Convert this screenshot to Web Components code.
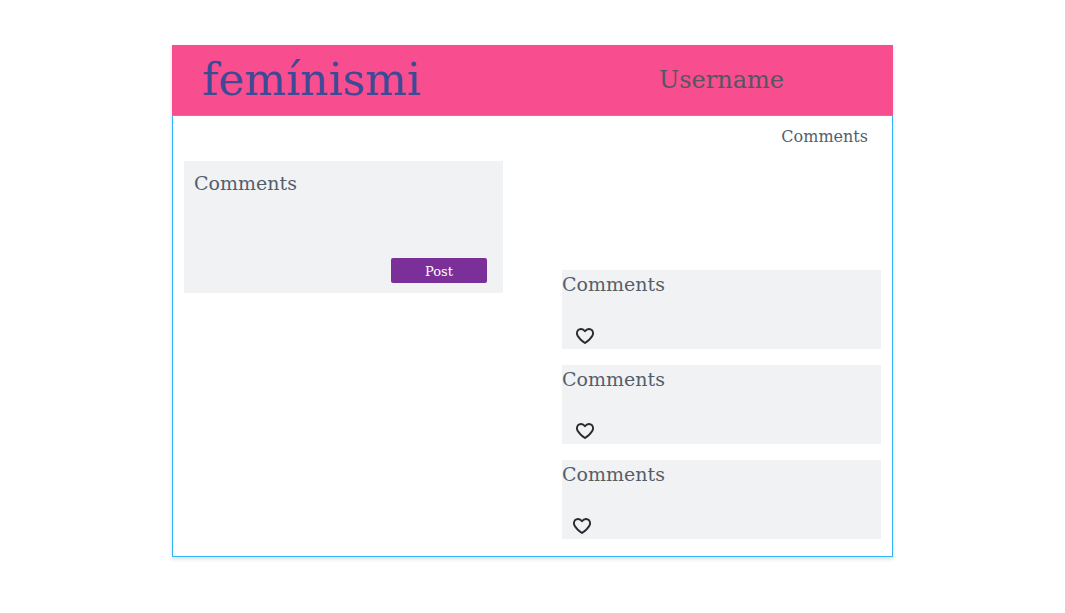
<!DOCTYPE html>
<html lang="en">
<head>
<meta charset="utf-8">
<meta name="viewport" content="width=device-width, initial-scale=1">
<title>femínismi</title>
<style>
body { margin: 0; padding: 45px 16px; background: #fff; color: #545e6b; font-family: "DejaVu Serif", serif; }
</style>
</head>
<body>
<fem-page>
  <fem-header slot="header" user="Username">femínismi</fem-header>
  <fem-nav slot="nav">Comments</fem-nav>
  <fem-composer slot="main" action="Post">Comments</fem-composer>
  <fem-feed slot="aside">
    <fem-comment>Comments</fem-comment>
    <fem-comment>Comments</fem-comment>
    <fem-comment class="near">Comments</fem-comment>
  </fem-feed>
</fem-page>
<script>
function define(name, html, setup) {
  const template = document.createElement('template');
  template.innerHTML = html;
  customElements.define(name, class extends HTMLElement {
    constructor() {
      super();
      this.attachShadow({ mode: 'open' }).append(template.content.cloneNode(true));
    }
    connectedCallback() {
      if (setup) setup(this, this.shadowRoot);
    }
  });
}

define('fem-page', `
<style>
:host { display: block; box-sizing: border-box; max-width: 721px; margin: 0 auto; border: 1px solid #2fb4fb; border-top: 0; box-shadow: 0 2px 4px rgba(0, 0, 0, .14); }
main { display: grid; grid-template-columns: 1fr 1fr; column-gap: 59px; align-items: start; padding: 0 11px 17px; }
::slotted([slot=header]) { margin: 0 -1px; }
</style>
<slot name="header"></slot>
<slot name="nav"></slot>
<main><slot name="main"></slot><slot name="aside"></slot></main>`);

define('fem-header', `
<style>
:host { display: block; background: #f84d8e; border-bottom: 1px solid #2fb4fb; }
header { display: grid; grid-template-columns: 487px 1fr; align-items: center; min-height: 70px; }
h1 { margin: 0; padding-left: 30px; color: #3e4a95; font-size: 44px; line-height: 64px; font-weight: 400; }
a { color: #545763; font-size: 24px; line-height: 32px; text-decoration: none; }
</style>
<header><h1><slot></slot></h1><a href="#profile"></a></header>`,
(host, root) => { root.querySelector('a').textContent = host.getAttribute('user'); });

define('fem-nav', `
<style>
:host { display: block; }
nav { display: flex; justify-content: flex-end; padding: 11px 24px 14px; }
a { color: inherit; font-size: 16px; line-height: 20px; text-decoration: none; }
</style>
<nav><a href="#comments"><slot></slot></a></nav>`);

define('fem-composer', `
<style>
:host { display: block; background: #f1f2f4; }
form { display: flex; flex-direction: column; padding: 10px 16px 10px 10px; }
label { font-size: 19px; line-height: 24px; }
textarea { display: block; height: 63px; box-sizing: border-box; border: 0; padding: 0; resize: none; background: transparent; color: inherit; font: inherit; font-size: 16px; outline-color: #7b3099; }
button { align-self: flex-end; width: 96px; height: 25px; border: 0; border-radius: 2px; padding: 2px 0 0; background: #7b3099; color: #fff; font-family: inherit; font-size: 13px; line-height: 20px; font-weight: 400; }
</style>
<form><label for="text"><slot></slot></label><textarea id="text"></textarea><button type="button"></button></form>`,
(host, root) => { root.querySelector('button').textContent = host.getAttribute('action'); });

define('fem-feed', `
<style>
:host { display: flex; flex-direction: column; gap: 16px; padding-top: 109px; }
</style>
<slot></slot>`);

define('fem-comment', `
<style>
:host { display: block; background: #f1f2f4; }
article { display: flex; flex-direction: column; justify-content: space-between; align-items: flex-start; min-height: 79px; }
p { margin: 0; padding-top: 2px; font-size: 19px; line-height: 24px; }
button { display: flex; margin: 0 0 4px 13px; border: 0; padding: 0; background: none; color: #292c2f; }
:host(.near) button { margin-left: 10px; }
svg { display: block; width: 20px; height: 18px; }
</style>
<article>
  <p><slot></slot></p>
  <button type="button" aria-label="Like">
    <svg viewBox="0 0 20 18" fill="none" stroke="currentColor" stroke-width="1.9" stroke-linejoin="round" aria-hidden="true"><path d="M10 4.2C8.7 2.4 6.7 1.8 4.9 2.2C2.1 2.9 1.1 6 2.6 8.7C4.1 11.4 7 13.9 10 16C13 13.9 15.9 11.4 17.4 8.7C18.9 6 17.9 2.9 15.1 2.2C13.3 1.8 11.3 2.4 10 4.2Z"/></svg>
  </button>
</article>`);
</script>
</body>
</html>
